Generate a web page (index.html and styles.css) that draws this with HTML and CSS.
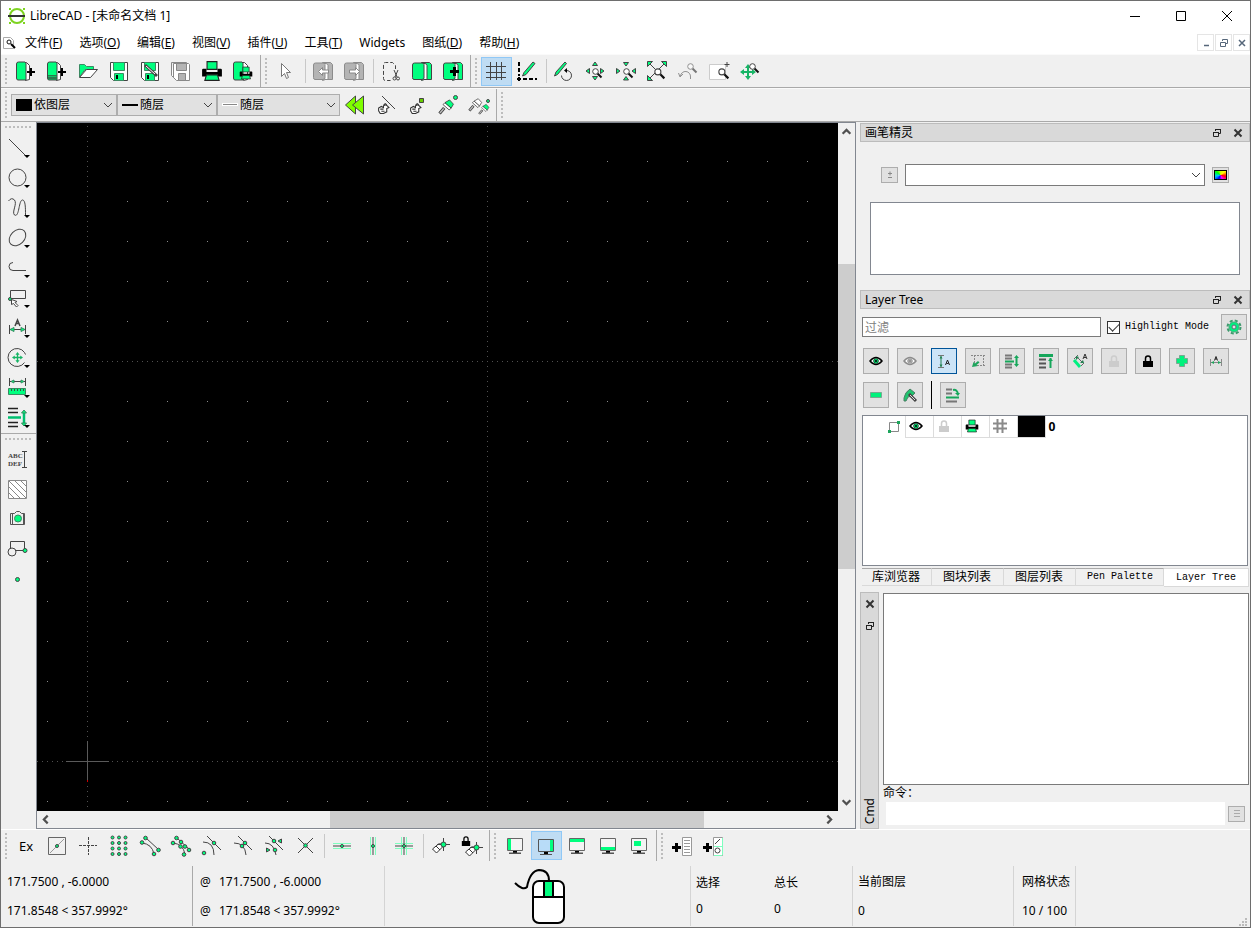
FILE: index.html
```
<!DOCTYPE html>
<html lang="zh-CN">
<head>
    <meta charset="UTF-8">
    <meta name="viewport" content="width=device-width, initial-scale=1.0">
    <title>LibreCAD - [未命名文档 1]</title>
    <link rel="stylesheet" href="styles.css">
</head>
<body>
    <!-- Shared icon shapes -->
    <svg class="symbols" aria-hidden="true">
        <symbol id="lens" viewBox="0 0 12 12"><path d="M6.500 6.500l4 4" stroke="#111" stroke-width="2"/><circle cx="4.500" cy="4.500" r="2.800" fill="#fff" stroke="#444"/></symbol>
        <symbol id="chevron" viewBox="0 0 10 10"><path d="M1 3l4 4 4-4" fill="none" stroke="#444"/></symbol>
        <symbol id="arrow" viewBox="0 0 10 10"><path d="M1.500 3l3.500 3.500L8.500 3" fill="none" stroke="#505050" stroke-width="2"/></symbol>
        <symbol id="restore" viewBox="0 0 10 10"><path d="M3.500 3V1.500h5v4H7M3 1.500h6M1 4.500h5.500M1.500 4v4.500h5V4" fill="none" stroke="#222"/></symbol>
        <symbol id="cross" viewBox="0 0 10 10"><path d="M1.500 1.500l7 7M8.500 1.500l-7 7" stroke="#333" stroke-width="2"/></symbol>
        <symbol id="eye" viewBox="0 0 14 10"><path d="M1 5q6-7 12 0q-6 7-12 0z" fill="#fff" stroke="currentColor" stroke-width="1.500"/><circle cx="7" cy="5" r="2.500" fill="var(--iris)" stroke="currentColor" stroke-width=".5"/><circle cx="7" cy="5" r="1" fill="currentColor" stroke="none"/></symbol>
        <symbol id="lock" viewBox="0 0 12 14"><path d="M3.500 7V4.500a2.500 2.500 0 0 1 5 0V7" fill="none" stroke="currentColor" stroke-width="1.500"/><path d="M1 7h10v6H1z" fill="currentColor" stroke="none"/></symbol>
        <symbol id="printer" viewBox="0 0 20 20"><path d="M5.500 1.500h9v7h-9z" fill="#00ff7f" stroke="#222"/><path d="M1 9q0-1 1-1h3v3h10V8h3q1 0 1 1v6H1z" fill="#000" stroke="none"/><path d="M5 13.500h10l1.500 5h-13z" fill="#00ff7f" stroke="#222"/></symbol>
        <symbol id="monitor" viewBox="0 0 18 18"><path d="M1.500 1.500h15v12h-15z" fill="#f4f4f4" stroke="#666"/><path d="M7 14h4v2H7z" fill="#000" stroke="none"/><path d="M3 15.500h12V17H3z" fill="#555" stroke="none"/></symbol>
        <symbol id="pages" viewBox="0 0 22 22"><path d="M10.500 2.500h8l2 2v15h-7l-3 1z" fill="var(--leaf)" stroke="var(--edge)"/><path d="M10 3.500h4q2 .5 2 2v14h-3" fill="#fff" stroke="var(--edge)"/><path d="M1.500 5q0-2 2-2h8l1.500 1.500v14l-2 1h-8q-1.500 0-1.500-2z" fill="var(--leaf)" stroke="var(--edge)"/></symbol>
        <symbol id="hand" viewBox="0 0 12 12"><path d="M1.500 9V6.500L4 5l2 1V4.500Q8 3 9.500 4.500L11 6l-2 1v3l-3 1.500H3z" fill="#fff" stroke="#333"/><path d="M3 7.500h3M4 9.500h3M6 4l1.500-1.500 1.500 1" stroke="#333"/></symbol>
        <symbol id="brush" viewBox="0 0 22 22"><path d="M2 20l6-7" stroke="#333" stroke-width="4"/><path d="M2.500 19.500l5-6" stroke="#bbb" stroke-width="2"/><path d="M6.500 8.500L9 6l8 7-2.500 2.500z" fill="#fff" stroke="#333"/><path d="M9 6l6-3.500 5 5.500-3 5z" fill="var(--leaf)" stroke="#333"/></symbol>
        <symbol id="rubber" viewBox="0 0 14 12"><path d="M1.500 7l6-5q4-1 4 3l-6 6z" fill="#fff" stroke="#333"/><path d="M5 4l4 4" stroke="#333"/></symbol>
        <symbol id="move" viewBox="0 0 16 16"><path d="M8 3v10M3 8h10" stroke="#16b565" stroke-width="2"/><path d="M5 4l3-4 3 4zM5 12l3 4 3-4zM4 5L0 8l4 3zM12 5l4 3-4 3z" fill="#16b565" stroke="none"/></symbol>
    </svg>

    <div class="window">
        <header class="title-bar">
            <svg class="logo" viewBox="0 0 18 18"><circle cx="9" cy="9" r="7" fill="none" stroke="#7ed321" stroke-width="2"/><path d="M1 1h2v2H1zM15 1h2v2h-2zM1 15h2v2H1zM15 15h2v2h-2z" fill="#7ed321"/><path d="M0 9h17" stroke="#333" stroke-width="2"/></svg>
            <h1>LibreCAD - [未命名文档 1]</h1>
            <div class="window-buttons">
                <button type="button" aria-label="最小化"><svg viewBox="0 0 12 12"><path d="M1 6.500h10"/></svg></button>
                <button type="button" aria-label="最大化"><svg viewBox="0 0 12 12"><path d="M1.500 1.500h9v9h-9z"/></svg></button>
                <button type="button" aria-label="关闭"><svg viewBox="0 0 12 12"><path d="M1 1l10 10M11 1L1 11"/></svg></button>
            </div>
        </header>

        <nav class="menu-bar">
            <svg class="doc-icon" viewBox="0 0 14 14"><path d="M1.500 1.500h7l3 3v8h-10z" fill="#fff" stroke="#aaa"/><circle cx="7" cy="6" r="2" fill="#fff" stroke="#111"/><path d="M9 8l4 4" stroke="#000" stroke-width="2"/></svg>
            <ul>
                <li><a href="#">文件(<u>F</u>)</a></li>
                <li><a href="#">选项(<u>O</u>)</a></li>
                <li><a href="#">编辑(<u>E</u>)</a></li>
                <li><a href="#">视图(<u>V</u>)</a></li>
                <li><a href="#">插件(<u>U</u>)</a></li>
                <li><a href="#">工具(<u>T</u>)</a></li>
                <li><a href="#">Widgets</a></li>
                <li><a href="#">图纸(<u>D</u>)</a></li>
                <li><a href="#">帮助(<u>H</u>)</a></li>
            </ul>
            <div class="mdi-buttons">
                <button type="button" aria-label="最小化"><svg viewBox="0 0 10 10"><path d="M3 7.500h5" stroke="#56677a" stroke-width="1.500"/></svg></button>
                <button type="button" aria-label="还原"><svg viewBox="0 0 10 10"><path d="M3.500 3V1.500h5v4H7M1.500 4.500h5v4h-5z" fill="none" stroke="#56677a"/></svg></button>
                <button type="button" aria-label="关闭"><svg viewBox="0 0 10 10"><path d="M2 2l6 6M8 2L2 8" stroke="#56677a" stroke-width="1.500"/></svg></button>
            </div>
        </nav>

        <div class="tool-row">
            <div class="toolbar">
                <span class="handle"></span>
                <button type="button" class="tool" aria-label="新建"><svg class="ic" viewBox="0 0 22 22"><path class="w" d="M8.500 2.500h3l3 3v14l-4 1z"/><path class="g" d="M1.500 4q0-2 2-2H10l1 1v17H3q-1.500 0-1.500-2z"/><path class="k" d="M15 8h2v3h3v2h-3v3h-2v-3h-3v-2h3z"/></svg></button>
                <button type="button" class="tool" aria-label="从模板新建"><svg class="ic" viewBox="0 0 22 22"><path class="w" d="M8.500 2.500h3l3 3v14l-4 1z"/><path class="g" d="M1.500 4q0-2 2-2H10l1 1v17H3q-1.500 0-1.500-2z"/><path d="M2 15.500h9" stroke="#2a7a50"/><path d="M2 18h9" stroke="#2a7a50" stroke-width="3"/><path class="k" d="M15 8h2v3h3v2h-3v3h-2v-3h-3v-2h3z"/></svg></button>
                <button type="button" class="tool" aria-label="打开"><svg class="ic" viewBox="0 0 22 22"><path class="g nl" d="M2.500 17V4.500h5l2 2h7v3H8z"/><path class="w" d="M2.500 17.500l7-8h11l-7 8z"/></svg></button>
                <button type="button" class="tool" aria-label="保存"><svg class="ic" viewBox="0 0 22 22"><path class="w" d="M2.500 2.500h17v18h-14l-3-3z"/><path class="g nl" d="M5.500 2.500h11v8h-11zM6.500 13.500h9v7h-9z"/><path class="k" d="M8 15h2v4H8z"/></svg></button>
                <button type="button" class="tool" aria-label="另存为"><svg class="ic" viewBox="0 0 22 22"><path class="w" d="M2.500 2.500h17v18h-14l-3-3z"/><path class="g nl" d="M5.500 2.500h11v8h-11zM6.500 13.500h9v7h-9z"/><path class="k" d="M8 15h2v4H8z"/><path d="M6 5l12 11" stroke-width="3"/><path d="M7 6l9 8" stroke="#fff"/></svg></button>
                <button type="button" class="tool" aria-label="全部保存"><svg class="ic gray" viewBox="0 0 22 22"><path class="w" d="M1.500 2.500h15v2M1.500 2.500v13l3 3"/><path class="w" d="M3.500 3.500h15l1 1v16h-13l-3-3z"/><path class="g" d="M6.500 3.500h10v7h-10zM8.500 13.500h7v7h-7z"/></svg></button>
                <button type="button" class="tool" aria-label="打印"><svg class="ic"><use href="#printer"/></svg></button>
                <button type="button" class="tool" aria-label="打印预览"><svg class="ic" viewBox="0 0 22 22"><path class="w" d="M8.500 2.500h4l3 3v14l-4 1z"/><path class="g" d="M1.500 4q0-2 2-2H10l1 1v17H3q-1.500 0-1.500-2z"/><use href="#printer" x="7" y="6" width="14" height="14"/></svg></button>
            </div>
            <div class="toolbar">
                <span class="handle"></span>
                <button type="button" class="tool" aria-label="选择"><svg class="ic" viewBox="0 0 22 22"><path d="M6.500 3.500v13l3-3 2 5 2-1-2-5h4z" fill="#fff" stroke="#777"/></svg></button>
                <span class="sep"></span>
                <button type="button" class="tool" aria-label="撤销"><svg class="ic muted" viewBox="0 0 22 22"><use href="#pages"/><path class="w" d="M6.500 11.500l4-4v2.500h6v3h-6v2.500z"/></svg></button>
                <button type="button" class="tool" aria-label="重做"><svg class="ic muted" viewBox="0 0 22 22"><use href="#pages"/><path class="w" d="M16.500 11.500l-4-4v2.500h-6v3h6v2.500z"/></svg></button>
                <span class="sep"></span>
                <button type="button" class="tool" aria-label="剪切"><svg class="ic" viewBox="0 0 22 22"><path d="M15.500 9V5.500l-3-3h-7q-2 0-2 2v14q0 2 2 2h5" stroke-dasharray="4 2"/><path d="M14 10l3 7M18 10l-3 7"/><circle cx="14.500" cy="18.500" r="1.500"/><circle cx="18" cy="18.500" r="1.500"/></svg></button>
                <button type="button" class="tool" aria-label="复制"><svg class="ic"><use href="#pages"/></svg></button>
                <button type="button" class="tool" aria-label="粘贴"><svg class="ic" viewBox="0 0 22 22"><use href="#pages"/><path class="k" d="M11 7h3v3h3v3h-3v3h-3v-3H8v-3h3z"/></svg></button>
            </div>
            <div class="toolbar last">
                <span class="handle"></span>
                <button type="button" class="tool active" aria-label="网格"><svg class="ic" viewBox="0 0 22 22"><path d="M5.500 2v18M11.500 2v18M16.500 2v18M1 6.500h20M1 12.500h20M1 17.500h20"/></svg></button>
                <button type="button" class="tool" aria-label="草图模式"><svg class="ic" viewBox="0 0 22 22"><path d="M3 2v14M7 19h14" stroke="#000" stroke-width="2" stroke-dasharray="4 2"/><path d="M1 19h4M3 17v4" stroke="#000" stroke-width="2"/><path class="g" d="M8 12.500l9-10.500 2 1.500-9 11-3.500 1.500z"/></svg></button>
                <span class="sep"></span>
                <button type="button" class="tool" aria-label="重绘"><svg class="ic" viewBox="0 0 22 22"><path class="g" d="M3 12l9-10 1.500 1.500-9 11L1.500 16z"/><path d="M13 10.500a5 5 0 1 1-4.500 5"/><path class="k" d="M14 8v5l-3-2.500z"/></svg></button>
                <button type="button" class="tool" aria-label="放大"><svg class="ic" viewBox="0 0 22 22"><path class="g" d="M8.500 5.500h5L11 2zM8.500 16.500h5L11 20zM5.500 8.500v5L2 11zM16.500 8.500v5L20 11z"/><use href="#lens" x="7" y="7" width="12" height="12"/></svg></button>
                <button type="button" class="tool" aria-label="缩小"><svg class="ic" viewBox="0 0 22 22"><path class="g" d="M8.500 2.500h5L11 6zM8.500 20h5L11 16.500zM1.500 8.500v5L5 11zM20.500 8.500v5L17 11z"/><use href="#lens" x="7" y="7" width="12" height="12"/></svg></button>
                <button type="button" class="tool" aria-label="自动缩放"><svg class="ic" viewBox="0 0 22 22"><path d="M3 3l7 7M19 3L3 19"/><path class="g" d="M1.500 1.500h5l-5 5zM20.500 1.500h-5l5 5zM1.500 20.500h5l-5-5z"/><use href="#lens" x="7" y="7" width="13" height="13"/></svg></button>
                <button type="button" class="tool" aria-label="上一视图"><svg class="ic" viewBox="0 0 22 22" opacity=".55"><path d="M13.500 19v-2a5 5 0 0 0-10-1M1.500 13l1.500 4 3-3"/><use href="#lens" x="9" y="2" width="12" height="12"/></svg></button>
                <button type="button" class="tool" aria-label="窗口缩放"><svg class="ic" viewBox="0 0 22 22"><path d="M1.500 4.500h16v15h-16z" fill="#fff" stroke="#ccc"/><path d="M19 2v5M16.500 4.500h5"/><use href="#lens" x="9" y="7" width="13" height="13"/></svg></button>
                <button type="button" class="tool" aria-label="平移"><svg class="ic" viewBox="0 0 22 22"><use href="#move" x="1" y="4" width="16" height="16"/><use href="#lens" x="9" y="2" width="12" height="12"/></svg></button>
            </div>
        </div>

        <div class="tool-row pen-row">
            <div class="toolbar">
                <span class="handle"></span>
                <div class="combo combo-color"><span class="swatch"></span><select aria-label="颜色"><option>依图层</option></select><svg class="chev"><use href="#chevron"/></svg></div>
                <div class="combo combo-width"><span class="swatch"></span><select aria-label="线宽"><option>随层</option></select><svg class="chev"><use href="#chevron"/></svg></div>
                <div class="combo combo-type"><span class="swatch"></span><select aria-label="线型"><option>随层</option></select><svg class="chev"><use href="#chevron"/></svg></div>
                <button type="button" class="tool" aria-label="后退"><svg class="ic" viewBox="0 0 22 22"><path d="M11.500 2v18L1.500 11z" fill="#7fff00"/><path d="M19.500 2v18L8.500 11z" fill="#7fff00"/></svg></button>
                <button type="button" class="tool" aria-label="从图元取笔"><svg class="ic" viewBox="0 0 22 22"><path d="M7 2l13 13"/><use href="#hand" x="2" y="7" width="13" height="13"/></svg></button>
                <button type="button" class="tool" aria-label="从图层取笔"><svg class="ic" viewBox="0 0 22 22"><use href="#hand" x="3" y="7" width="13" height="13"/><path d="M13.500 4.500h4v4h-4z" fill="#66cc00"/></svg></button>
                <button type="button" class="tool" aria-label="应用画笔"><svg class="ic" viewBox="0 0 22 22"><use href="#brush" x="1" y="4" width="17" height="17"/><circle class="g" cx="18.500" cy="3.500" r="2"/></svg></button>
                <button type="button" class="tool" aria-label="复制画笔"><svg class="ic" viewBox="0 0 22 22"><use href="#brush" y="2" width="15" height="17" class="white-leaf"/><use href="#brush" x="10" y="9" width="12" height="12"/><circle class="g" cx="20" cy="7" r="1.500"/></svg></button>
            </div>
            <div class="toolbar last"><span class="handle"></span></div>
        </div>

        <main class="workspace">
            <aside class="side-tools">
                <div class="side-group">
                    <span class="handle-h"></span>
                    <button type="button" class="tool drop" aria-label="直线"><svg class="ic" viewBox="0 0 22 22"><path d="M2 2l16 16"/></svg></button>
                    <button type="button" class="tool drop" aria-label="圆"><svg class="ic" viewBox="0 0 22 22"><circle cx="10.500" cy="10.500" r="8.500"/></svg></button>
                    <button type="button" class="tool drop" aria-label="曲线"><svg class="ic" viewBox="0 0 22 22"><path d="M1.500 4q3-4 6-1c3 4-3 12 0 15 5 3 4-15 8-15 3 0 3 8 3 15"/></svg></button>
                    <button type="button" class="tool drop" aria-label="椭圆"><svg class="ic" viewBox="0 0 22 22"><ellipse cx="10.500" cy="10.500" rx="9.500" ry="7" transform="rotate(-45 10.500 10.500)"/></svg></button>
                    <button type="button" class="tool drop" aria-label="多段线"><svg class="ic" viewBox="0 0 22 22"><path d="M6 5.500a4 4 0 0 0 0 8h13"/></svg></button>
                    <button type="button" class="tool drop" aria-label="选择"><svg class="ic" viewBox="0 0 22 22"><path d="M3.500 3.500h15v8h-15z"/><circle class="g" cx="3" cy="12" r="1.500"/><path class="w" d="M4.500 12.500v5l2-1 3 3.500 1.500-1.500-3-3 2-1z"/></svg></button>
                    <button type="button" class="tool drop" aria-label="标注"><svg class="ic" viewBox="0 0 22 22"><path d="M2.500 8v9M18.500 8v9M3 12.500h15"/><path d="M8 9l2.500-6L13 9M9 6.500h3" stroke-width="1.500"/><path class="g nl" d="M3 12.500l4-2v4zM18 12.500l-4-2v4z"/></svg></button>
                    <button type="button" class="tool drop" aria-label="修改"><svg class="ic" viewBox="0 0 22 22"><path d="M17.500 15.500a9 9 0 1 1 0-10l1 2"/><use href="#move" x="5" y="5" width="11" height="11"/></svg></button>
                    <button type="button" class="tool drop" aria-label="测量"><svg class="ic" viewBox="0 0 22 22"><path d="M2.500 1v8M18.500 1v8M3 4.500h15"/><path class="g nl" d="M4 4.500l3-1.500v3zM17 4.500l-3-1.500v3zM1.500 11.500h17v6h-17z"/><path d="M4.500 12v2M7.500 12v2M10.500 12v2M13.500 12v2M16.500 12v2"/></svg></button>
                    <button type="button" class="tool drop" aria-label="顺序"><svg class="ic" viewBox="0 0 22 22"><path d="M1 1.500h10M1 5.500h10M1 15.500h10M1 19.500h10" stroke="#222" stroke-width="1.500"/><path d="M1 10.500h13M17 5v12" stroke="#00c070" stroke-width="2.500"/><path class="g nl" d="M14.500 6l2.500-3 2.500 3zM14.500 16l2.500 3 2.500-3z"/></svg></button>
                </div>
                <div class="side-group">
                    <span class="handle-h"></span>
                    <button type="button" class="tool" aria-label="文字"><svg class="ic" viewBox="0 0 22 22"><text x="1" y="9">ABC</text><text x="1" y="17">DEF</text><path d="M17.500 3v15M15 2.500h5M15 18.500h5"/></svg></button>
                    <button type="button" class="tool" aria-label="填充"><svg class="ic" viewBox="0 0 22 22"><path d="M1.500 1.500h18v18h-18z" fill="#fff" stroke="#888"/><path d="M2 14l5 5M2 8l11 11M2 2l17 17M8 2l11 11M14 2l5 5" stroke="#888"/></svg></button>
                    <button type="button" class="tool" aria-label="图像"><svg class="ic" viewBox="0 0 22 22"><path d="M3.500 4.500h4l2-2h3l2 2h3v11h-14zM5.500 5v10M16.500 5v10" stroke="#555"/><circle class="g nl" cx="11" cy="9.500" r="3.500"/></svg></button>
                    <button type="button" class="tool" aria-label="块"><svg class="ic" viewBox="0 0 22 22"><path d="M3.500 10V2.500h14v9H8"/><circle cx="5" cy="13" r="4"/><circle class="g" cx="18" cy="11.500" r="2"/></svg></button>
                    <button type="button" class="tool" aria-label="点"><svg class="ic" viewBox="0 0 22 22"><circle class="g" cx="10.500" cy="10.500" r="2"/></svg></button>
                </div>
            </aside>

            <section class="drawing">
                <svg class="canvas" aria-label="绘图区">
                    <defs>
                        <pattern id="grid" x="10" y="38" width="40" height="40" patternUnits="userSpaceOnUse"><rect width="1" height="1" fill="#8c8c8c"/></pattern>
                    </defs>
                    <rect width="100%" height="100%" fill="#000"/>
                    <rect width="100%" height="100%" fill="url(#grid)"/>
                    <g stroke="#505050" stroke-dasharray="1 4">
                        <line x1="50.500" y1="3" x2="50.500" y2="100%"/>
                        <line x1="450.500" y1="3" x2="450.500" y2="100%"/>
                        <line x1="0" y1="238.500" x2="100%" y2="238.500"/>
                        <line x1="0" y1="638.500" x2="100%" y2="638.500"/>
                    </g>
                    <path d="M29 638.500h43M50.500 618v40" stroke="#5a5a5a"/>
                    <path d="M50.500 657v2" stroke="#c00"/>
                </svg>
                <div class="scroll scroll-v">
                    <svg class="arrow up"><use href="#arrow"/></svg>
                    <span class="before"></span><span class="thumb"></span><span class="after"></span>
                    <svg class="arrow"><use href="#arrow"/></svg>
                </div>
                <div class="scroll scroll-h">
                    <svg class="arrow left"><use href="#arrow"/></svg>
                    <span class="before"></span><span class="thumb"></span><span class="after"></span>
                    <svg class="arrow right"><use href="#arrow"/></svg>
                </div>
            </section>

            <aside class="docks">
                <section class="dock pen-wizard">
                    <header class="dock-title">
                        <h2>画笔精灵</h2>
                        <button type="button" aria-label="浮动"><svg><use href="#restore"/></svg></button>
                        <button type="button" aria-label="关闭"><svg><use href="#cross"/></svg></button>
                    </header>
                    <div class="wizard-row">
                        <button type="button" class="mini" aria-label="添加"><svg viewBox="0 0 10 10"><path d="M3 3.500h4M5 1.500v4M3 7.500h4" stroke="#888"/></svg></button>
                        <div class="combo combo-pick"><select aria-label="收藏颜色"><option></option></select><svg class="chev"><use href="#chevron"/></svg></div>
                        <button type="button" class="mini" aria-label="选择颜色"><span class="rainbow"></span></button>
                    </div>
                    <div class="color-list"></div>
                </section>

                <section class="dock layer-tree">
                    <header class="dock-title">
                        <h2>Layer Tree</h2>
                        <button type="button" aria-label="浮动"><svg><use href="#restore"/></svg></button>
                        <button type="button" aria-label="关闭"><svg><use href="#cross"/></svg></button>
                    </header>
                    <div class="filter-row">
                        <input type="text" class="filter" placeholder="过滤" aria-label="过滤">
                        <label class="check"><input type="checkbox" checked> Highlight Mode</label>
                        <button type="button" class="flat" aria-label="设置"><svg viewBox="0 0 16 16"><circle cx="8" cy="8" r="6.500" fill="none" stroke="#3f9a6e" stroke-width="2" stroke-dasharray="3 2.100"/><circle cx="8" cy="8" r="5" fill="#00f080" stroke="#3fae78"/><circle cx="8" cy="8" r="2" fill="#e1e1e1" stroke="#667"/></svg></button>
                    </div>
                    <div class="layer-buttons">
                        <button type="button" class="flat" aria-label="显示全部"><svg viewBox="0 0 16 16"><use href="#eye" x="1" y="3" width="14" height="10"/></svg></button>
                        <button type="button" class="flat" aria-label="隐藏全部"><svg class="off" viewBox="0 0 16 16"><use href="#eye" x="1" y="3" width="14" height="10"/></svg></button>
                        <button type="button" class="flat on" aria-label="文字图层"><svg viewBox="0 0 16 16"><path d="M2 2.500h6M2 14.500h6" stroke="#777"/><path d="M5 3v11" stroke="#208050"/><path d="M3.500 5.500L5 3l1.500 2.500zM3.500 11.500L5 14l1.500-2.500z" fill="#208050"/><path d="M9.500 12l2-5 2 5M10.500 10.500h2" fill="none" stroke="#222"/></svg></button>
                        <button type="button" class="flat" aria-label="虚拟图层"><svg viewBox="0 0 16 16"><path d="M1 2.500h14M4.500 2v12M13.500 2v12M4 12.500h12" fill="none" stroke="#888" stroke-dasharray="2 1"/><path d="M2 14l1.500-5L5 10.500 8 8l1.500 1.500-3 2.500L8 13z" fill="#1da55c"/></svg></button>
                        <button type="button" class="flat" aria-label="居中"><svg viewBox="0 0 16 16"><path d="M1 2.500h7M1 5.500h7M1 11.500h7M1 14.500h7" stroke="#777" stroke-width="2"/><path d="M1 8.500h9M12.500 4v8" stroke="#16a75b" stroke-width="2"/><path d="M10 5l2.500-3L15 5zM10 11l2.500 3 2.500-3z" fill="#16a75b"/></svg></button>
                        <button type="button" class="flat" aria-label="置顶"><svg viewBox="0 0 16 16"><path d="M1 2.500h14" stroke="#16a75b" stroke-width="3"/><path d="M1 6.500h7M1 10.500h7M1 14.500h7" stroke="#555" stroke-width="2"/><path d="M12.500 5v10" stroke="#16a75b" stroke-width="2"/><path d="M10 8l2.500-3L15 8z" fill="#16a75b"/></svg></button>
                        <button type="button" class="flat" aria-label="标注图层"><svg viewBox="0 0 16 16"><path d="M2 7l6 7" stroke="#00f080" stroke-width="3"/><path d="M2 6l4-4M9 13l3-3M5 4l6 6" stroke="#666"/><path d="M4 3v4l3-3zM12 10H8l3-3z" fill="#208050"/><path d="M11 6l2-5 2 5M12 4.500h2" fill="none" stroke="#333"/></svg></button>
                        <button type="button" class="flat" aria-label="解锁"><svg class="faint" viewBox="0 0 16 16"><use href="#lock" x="2" y="1" width="12" height="14"/></svg></button>
                        <button type="button" class="flat" aria-label="锁定"><svg viewBox="0 0 16 16"><use href="#lock" x="2" y="1" width="12" height="14"/></svg></button>
                        <button type="button" class="flat" aria-label="添加图层"><svg viewBox="0 0 16 16"><path d="M5.500 2.500h5v3h3v5h-3v3h-5v-3h-3v-5h3z" fill="#00f27c" stroke="#77a890"/></svg></button>
                        <button type="button" class="flat" aria-label="尺寸图层"><svg viewBox="0 0 16 16"><path d="M2.500 6v7M13.500 6v7M3 9.500h10" stroke="#888"/><path d="M3 9.500l3-1.500v3zM13 9.500L10 8v3z" fill="#1da55c"/><path d="M6.500 7.500l1.500-4 1.500 4M7 6h2" fill="none" stroke="#222"/></svg></button>
                        <button type="button" class="flat" aria-label="删除图层"><svg viewBox="0 0 16 16"><path d="M2.500 5.500h11v5h-11z" fill="#00f27c" stroke="#77a890"/></svg></button>
                        <button type="button" class="flat" aria-label="编辑图层"><svg viewBox="0 0 16 16"><path d="M2 11q1-6 6-9l5 4-3 3-4 1-2 4H2z" fill="#1fc46f" stroke="#4b8065"/><path d="M7 7l7 7" stroke="#444" stroke-width="3"/><path d="M8 8l5 5" stroke="#ddd"/></svg></button>
                        <span class="bar"></span>
                        <button type="button" class="flat" aria-label="移动图层"><svg viewBox="0 0 16 16"><path d="M1 2.500h6M1 6.500h6M1 14.500h11" stroke="#777" stroke-width="2"/><path d="M1 10.500h13" stroke="#16a75b" stroke-width="2"/><path d="M8 3q4-1 5 4" fill="none" stroke="#16a75b" stroke-width="2"/><path d="M10 6h5l-2 3z" fill="#16a75b"/></svg></button>
                    </div>
                    <div class="tree">
                        <table>
                            <tr>
                                <td class="branch"><svg viewBox="0 0 14 14"><path d="M2.500 2.500h9v9h-9z" fill="none" stroke="#888"/><path d="M10 1h3v3h-3zM1 10h3v3H1z" fill="#1da55c"/></svg></td>
                                <td><svg viewBox="0 0 14 14"><use href="#eye" x="0" y="2" width="14" height="10"/></svg></td>
                                <td><svg class="faint" viewBox="0 0 14 14"><use href="#lock" x="1" width="12" height="14"/></svg></td>
                                <td><svg viewBox="0 0 14 14"><use href="#printer" width="14" height="14"/></svg></td>
                                <td><svg viewBox="0 0 14 14"><path d="M4.500 0v14M9.500 0v14M0 4.500h14M0 9.500h14" stroke="#8a8a8a" stroke-width="2"/></svg></td>
                                <td class="black"></td>
                                <td class="name">0</td>
                            </tr>
                        </table>
                    </div>
                    <nav class="tabs">
                        <button type="button">库浏览器</button>
                        <button type="button">图块列表</button>
                        <button type="button">图层列表</button>
                        <button type="button" class="mono">Pen Palette</button>
                        <button type="button" class="mono current">Layer Tree</button>
                    </nav>
                </section>

                <section class="cmd">
                    <header class="cmd-title">
                        <button type="button" aria-label="关闭"><svg><use href="#cross"/></svg></button>
                        <button type="button" aria-label="浮动"><svg><use href="#restore"/></svg></button>
                        <h2>Cmd</h2>
                    </header>
                    <div class="cmd-body">
                        <textarea aria-label="命令历史" readonly></textarea>
                        <label for="cmd-input">命令：</label>
                        <div class="cmd-line">
                            <input type="text" id="cmd-input">
                            <button type="button" class="mini" aria-label="菜单"><svg viewBox="0 0 10 10"><path d="M2 1.500h6M2 4.500h6M2 7.500h6" stroke="#aaa"/></svg></button>
                        </div>
                    </div>
                </section>
            </aside>
        </main>

        <div class="tool-row snap-row">
            <div class="toolbar">
                <span class="handle"></span>
                <button type="button" class="tool ex">Ex</button>
                <button type="button" class="tool" aria-label="自由捕捉"><svg class="ic" viewBox="0 0 22 22"><path d="M2.500 2.500h17v17h-17z" stroke="#666"/><path d="M4 18L18 4" stroke="#999"/><circle class="g" cx="11" cy="11" r="1.500"/></svg></button>
                <button type="button" class="tool" aria-label="网格捕捉"><svg class="ic" viewBox="0 0 22 22"><path d="M2 10.500h18M11.500 2v18" stroke-dasharray="3 1"/></svg></button>
                <button type="button" class="tool" aria-label="栅格"><svg class="ic" viewBox="0 0 22 22"><g class="g"><circle cx="4.500" cy="2.500" r="1.500"/><circle cx="11" cy="2.500" r="1.500"/><circle cx="17.500" cy="2.500" r="1.500"/><circle cx="4.500" cy="8" r="1.500"/><circle cx="11" cy="8" r="1.500"/><circle cx="17.500" cy="8" r="1.500"/><circle cx="4.500" cy="13.500" r="1.500"/><circle cx="11" cy="13.500" r="1.500"/><circle cx="17.500" cy="13.500" r="1.500"/><circle cx="4.500" cy="19" r="1.500"/><circle cx="11" cy="19" r="1.500"/><circle cx="17.500" cy="19" r="1.500"/></g></svg></button>
                <button type="button" class="tool" aria-label="端点"><svg class="ic" viewBox="0 0 22 22"><path d="M7 3l13 12M3 8q10 1 12 11"/><g class="g"><circle cx="6.500" cy="3" r="1.800"/><circle cx="3" cy="7.500" r="1.800"/><circle cx="19.500" cy="15" r="1.800"/><circle cx="15" cy="19" r="1.800"/></g></svg></button>
                <button type="button" class="tool" aria-label="图元上"><svg class="ic" viewBox="0 0 22 22"><path d="M7 3l13 12M3 8q10 1 12 11"/><g class="g"><circle cx="6.500" cy="3" r="1.800"/><circle cx="3" cy="8" r="1.800"/><circle cx="11" cy="7" r="1.800"/><circle cx="10.500" cy="11.500" r="1.800"/><circle cx="15" cy="11.500" r="1.800"/><circle cx="19" cy="15" r="1.800"/><circle cx="14" cy="19.500" r="1.800"/></g></svg></button>
                <button type="button" class="tool" aria-label="中心"><svg class="ic" viewBox="0 0 22 22"><path d="M6 1l14 14M2 7q11 0 11 13"/><circle class="g" cx="13" cy="8" r="1.800"/><circle class="g" cx="3" cy="18" r="1.800"/></svg></button>
                <button type="button" class="tool" aria-label="中点"><svg class="ic" viewBox="0 0 22 22"><path d="M6 1l14 14M2 8q11 0 12 12M8 12l6-4"/><circle class="g" cx="13" cy="8" r="1.800"/><circle class="g" cx="10" cy="11" r="1.800"/></svg></button>
                <button type="button" class="tool" aria-label="距离"><svg class="ic" viewBox="0 0 22 22"><path d="M6 1l14 14M2 8q9 0 11 12"/><g class="g"><circle cx="11" cy="6" r="1.800"/><circle cx="12" cy="15" r="1.800"/><path d="M18.500 4v4L15 6zM3.500 13v4L7 15z"/></g></svg></button>
                <button type="button" class="tool" aria-label="交点"><svg class="ic" viewBox="0 0 22 22"><path d="M4 3l15 15M19 3L4 18"/><circle class="g" cx="11.500" cy="10.500" r="1.800"/></svg></button>
                <span class="sep"></span>
                <button type="button" class="tool" aria-label="水平限制"><svg class="ic" viewBox="0 0 22 22"><path d="M2 8.500h18M2 13.500h18" stroke="#7fffbf"/><path d="M2 11h18"/><circle class="g" cx="11" cy="11" r="1.500"/></svg></button>
                <button type="button" class="tool" aria-label="垂直限制"><svg class="ic" viewBox="0 0 22 22"><path d="M8.500 2v18M13.500 2v18" stroke="#7fffbf"/><path d="M11 2v18"/><circle class="g" cx="11" cy="11" r="1.500"/></svg></button>
                <button type="button" class="tool" aria-label="正交限制"><svg class="ic" viewBox="0 0 22 22"><path d="M8.500 2v18M13.500 2v18M2 8.500h18M2 13.500h18" stroke="#7fffbf"/><path d="M11 2v18M2 11h18"/><circle class="g" cx="11" cy="11" r="1.500"/></svg></button>
                <span class="sep"></span>
                <button type="button" class="tool" aria-label="设置相对零点"><svg class="ic" viewBox="0 0 22 22"><use href="#rubber" x="1" y="7" width="14" height="12"/><path d="M7 9.500h13M13.500 3v13"/><circle class="g" cx="13.500" cy="9.500" r="2.500"/></svg></button>
                <button type="button" class="tool" aria-label="锁定相对零点"><svg class="ic" viewBox="0 0 22 22"><use href="#lock" width="10" height="12"/><use href="#rubber" x="3" y="10" width="14" height="12"/><path d="M9 12.500h13M15.500 7v12"/><circle class="g" cx="15.500" cy="12.500" r="2.500"/></svg></button>
            </div>
            <div class="toolbar">
                <span class="handle"></span>
                <button type="button" class="tool" aria-label="左侧停靠"><svg class="ic" viewBox="0 0 22 22"><use href="#monitor" x="2" y="2" width="18" height="18"/><path class="g none" d="M4 4h3v11H4z"/></svg></button>
                <button type="button" class="tool active" aria-label="右侧停靠"><svg class="ic" viewBox="0 0 22 22"><path d="M3.500 4.500h15v12h-15z" fill="#b8dcf8" stroke="#555"/><path class="k" d="M9 17h4v2H9z"/><path d="M5 19.500h12" stroke="#555"/><path class="g none" d="M15 5h3v11h-3z"/></svg></button>
                <button type="button" class="tool" aria-label="顶部停靠"><svg class="ic" viewBox="0 0 22 22"><use href="#monitor" x="2" y="2" width="18" height="18"/><path class="g none" d="M4 4h14v3H4z"/></svg></button>
                <button type="button" class="tool" aria-label="底部停靠"><svg class="ic" viewBox="0 0 22 22"><use href="#monitor" x="2" y="2" width="18" height="18"/><path class="g none" d="M4 12h14v3H4z"/></svg></button>
                <button type="button" class="tool" aria-label="浮动停靠"><svg class="ic" viewBox="0 0 22 22"><use href="#monitor" x="2" y="2" width="18" height="18"/><path class="g none" d="M6 6h7v5H6z"/></svg></button>
            </div>
            <div class="toolbar last">
                <span class="handle"></span>
                <button type="button" class="tool" aria-label="添加菜单"><svg class="ic" viewBox="0 0 22 22"><path class="k" d="M4 8h3v3h3v3H7v3H4v-3H1v-3h3z"/><path d="M11.500 2.500h9v18h-9z" fill="#fff" stroke="#999"/><path d="M13 5.500h6M13 8.500h6M13 11.500h6M13 14.500h6M13 17.500h6" stroke="#999"/></svg></button>
                <button type="button" class="tool" aria-label="添加工具栏"><svg class="ic" viewBox="0 0 22 22"><path class="k" d="M4 8h3v3h3v3H7v3H4v-3H1v-3h3z"/><path d="M11.500 2.500h9v18h-9z" fill="#fff" stroke="#999"/><path d="M12 11.500h8M20.500 3v17M12 20.500h8" stroke="#7fffbf"/><path d="M13 9l5-5"/><circle cx="15.500" cy="15.500" r="2.500"/></svg></button>
            </div>
        </div>

        <footer class="status">
            <div class="cell coords"><span>171.7500 , -6.0000</span><span>171.8548 &lt; 357.9992°</span></div>
            <div class="cell coords relative"><span><i>@</i>171.7500 , -6.0000</span><span><i>@</i>171.8548 &lt; 357.9992°</span></div>
            <div class="cell mouse">
                <svg viewBox="0 0 52 55"><path d="M2 14q8 8 12 4 3-16 12-17 10 0 10 11" fill="none" stroke="#000" stroke-width="2"/><rect x="20" y="12" width="31" height="42" rx="6" fill="#fff" stroke="#000" stroke-width="2"/><path d="M31 12h9v16h-9z" fill="#00ff7f"/><path d="M20 28h31M31 12v16M40 12v16M26 12h19" stroke="#000" stroke-width="2"/></svg>
            </div>
            <div class="cell tight"><span>选择</span><span>0</span></div>
            <div class="cell tight plain"><span>总长</span><span>0</span></div>
            <div class="cell narrow"><span>当前图层</span><span>0</span></div>
            <div class="cell"><span>网格状态</span><span>10 / 100</span></div>
            <div class="cell rest"><svg viewBox="0 0 8 8"><path d="M6 0h2v2H6zM3 3h2v2H3zM6 3h2v2H6zM0 6h2v2H0zM3 6h2v2H3zM6 6h2v2H6z" fill="#bbb"/></svg></div>
        </footer>
    </div>
</body>
</html>
```
FILE: styles.css
```
:root {
    --bg: #f0f0f0;
    --line: #a9a9a9;
    --leaf: #00ff7f;
    --edge: #444;
    --iris: #00d068;
    --frame: #828790;
}

* {
    box-sizing: border-box;
}

body {
    margin: 0;
    font-family: "Noto Sans", "Noto Sans CJK SC", sans-serif;
    font-size: 12px;
    line-height: 16px;
    color: #000;
    background-color: var(--bg);
}

button, input, select, textarea {
    font: inherit;
    color: inherit;
    margin: 0;
    padding: 0;
    border: 0;
    border-radius: 0;
    background: none;
}

h1, h2 {
    margin: 0;
    font-size: 12px;
    font-weight: normal;
}

.symbols {
    position: absolute;
    width: 0;
    height: 0;
}

.window {
    display: flex;
    flex-direction: column;
    height: 100vh;
    border: 1px solid #6e6e6e;
}

/* Title and menu */
.title-bar {
    display: flex;
    align-items: center;
    flex: none;
    height: 30px;
    padding-left: 7px;
    background-color: #fff;
}

.logo {
    width: 18px;
    height: 18px;
    margin-right: 4px;
}

.window-buttons {
    display: flex;
    margin-left: auto;
}

.window-buttons button {
    display: flex;
    align-items: center;
    justify-content: center;
    width: 46px;
    height: 30px;
}

.window-buttons svg {
    width: 12px;
    height: 12px;
    fill: none;
    stroke: #000;
}

.menu-bar {
    display: flex;
    align-items: center;
    flex: none;
    height: 23px;
    padding: 0 0 0 1px;
    background-color: #fff;
}

.doc-icon {
    width: 14px;
    height: 14px;
}

.menu-bar ul {
    display: flex;
    margin: 0;
    padding: 0;
    list-style: none;
}

.menu-bar a {
    display: block;
    padding: 0 8px 0 9px;
    color: #000;
    text-decoration: none;
}

.mdi-buttons {
    display: flex;
    gap: 1px;
    margin-left: auto;
}

.mdi-buttons button {
    display: flex;
    align-items: center;
    justify-content: center;
    width: 17px;
    height: 17px;
    border: 1px solid #e5e5e5;
}

.mdi-buttons svg {
    width: 10px;
    height: 10px;
}

/* Toolbars */
.tool-row {
    display: flex;
    flex: none;
    height: 34px;
    border-top: 1px solid #fafafa;
    border-bottom: 1px solid var(--line);
}

.toolbar {
    display: flex;
    align-items: center;
    padding: 0 1px 0 4px;
    border-right: 1px solid var(--line);
}

.toolbar.last {
    border-right: 0;
}

.handle {
    width: 3px;
    height: 26px;
    margin-right: 3px;
    border-right: 1px solid var(--bg);
    background: repeating-linear-gradient(#bdbdbd 0 2px, transparent 2px 4px);
}

.sep {
    width: 1px;
    height: 24px;
    margin: 0 2px 0 3px;
    background-color: #c8c8c8;
}

.tool {
    display: flex;
    align-items: center;
    justify-content: center;
    width: 31px;
    height: 29px;
    padding-right: 1px;
}

.tool.active {
    background-color: #bfdcf3;
    border: 1px solid #90c8f6;
}

.ic {
    flex: none;
    width: 22px;
    height: 22px;
    fill: none;
    stroke: #444;
}

.ic .g {
    fill: var(--leaf);
}

.ic .w {
    fill: #fff;
}

.ic .k {
    fill: #000;
    stroke: none;
}

.ic .nl {
    stroke: #3a8a62;
}

.ic .none {
    stroke: none;
}

.ic text {
    font-family: "Liberation Serif", serif;
    font-size: 7px;
    font-weight: bold;
    fill: #444;
    stroke: none;
}

.gray, .muted {
    --leaf: #b4b4b4;
    --edge: #8c8c8c;
    stroke: #888;
}

.white-leaf {
    --leaf: #fff;
}

.ex {
    font-size: 13px;
}

/* Drop-downs */
.combo {
    position: relative;
    height: 22px;
}

.combo select {
    appearance: none;
    width: 100%;
    height: 100%;
    padding-left: 22px;
    border: 1px solid #adadad;
    background-color: #e1e1e1;
}

.combo .chev {
    position: absolute;
    right: 4px;
    top: 6px;
    width: 10px;
    height: 10px;
    pointer-events: none;
}

.swatch {
    position: absolute;
    left: 5px;
    top: 5px;
    width: 16px;
    height: 12px;
    pointer-events: none;
    background-color: #000;
}

.combo-color {
    width: 106px;
}

.combo-width {
    width: 100px;
}

.combo-width .swatch {
    top: 10px;
    height: 2px;
}

.combo-type {
    width: 123px;
}

.combo-type .swatch {
    top: 9px;
    height: 3px;
    border: 1px solid #fff;
    background-color: #888;
}

/* Left toolbars */
.workspace {
    display: flex;
    flex: 1;
    min-height: 0;
}

.side-tools {
    flex: none;
    width: 35px;
}

.side-group {
    display: flex;
    flex-direction: column;
    padding: 4px 2px 0;
    border-bottom: 1px solid var(--line);
}

.side-group:last-child {
    border-bottom: 0;
}

.handle-h {
    height: 2px;
    width: 27px;
    margin: 0 0 5px 2px;
    background: repeating-linear-gradient(90deg, #bdbdbd 0 2px, transparent 2px 4px);
}

.side-group .tool {
    position: relative;
    height: 30px;
}

.drop::after {
    content: "";
    position: absolute;
    right: 4px;
    bottom: 5px;
    border: 3px solid transparent;
    border-top-color: #000;
    border-bottom: 0;
}

/* Drawing area */
.drawing {
    display: grid;
    grid-template-columns: 1fr 17px;
    grid-template-rows: 1fr 17px;
    flex: 1;
    min-width: 0;
    border: 1px solid var(--frame);
}

.canvas {
    width: 100%;
    height: 100%;
    min-height: 0;
    shape-rendering: crispEdges;
}

.scroll {
    display: flex;
}

.scroll-v {
    flex-direction: column;
    width: 17px;
}

.scroll-h {
    height: 17px;
}

.arrow {
    flex: none;
    width: 17px;
    height: 17px;
    padding: 3px;
}

.up {
    transform: rotate(180deg);
}

.left {
    transform: rotate(90deg);
}

.right {
    transform: rotate(-90deg);
}

.thumb {
    background-color: #cdcdcd;
}

.scroll-v .before { flex: 124; }
.scroll-v .thumb { flex: 305; }
.scroll-v .after { flex: 225; }
.scroll-h .before { flex: 276; }
.scroll-h .thumb { flex: 374; }
.scroll-h .after { flex: 117; }

/* Docks */
.docks {
    display: flex;
    flex-direction: column;
    flex: none;
    width: 390px;
    margin-left: 4px;
    padding-top: 1px;
}

.dock-title {
    display: flex;
    align-items: center;
    gap: 11px;
    height: 19px;
    padding: 0 6px 0 4px;
    background-color: #d9d9d9;
    border: 1px solid #bcbcbc;
}

.dock-title h2 {
    margin-right: auto;
}

.dock-title button, .cmd-title button {
    display: block;
    width: 10px;
    height: 10px;
}

.dock-title svg, .cmd-title svg {
    display: block;
    width: 10px;
    height: 10px;
}

.wizard-row {
    display: flex;
    align-items: center;
    gap: 7px;
    padding: 22px 21px 16px;
}

.combo-pick {
    flex: 1;
}

.combo-pick select {
    background-color: #fff;
    border-color: #7a7a7a;
}

.mini {
    display: flex;
    align-items: center;
    justify-content: center;
    flex: none;
    width: 17px;
    height: 16px;
    background-color: #e1e1e1;
    border: 1px solid #adadad;
}

.mini svg {
    width: 10px;
    height: 10px;
}

.rainbow {
    width: 13px;
    height: 10px;
    border: 1px solid #000;
    background: conic-gradient(#cf0, #ff0, #f00, #f0f, #00f, #0cf, #0f0, #cf0);
}

.color-list {
    height: 73px;
    margin: 0 10px 15px;
    background-color: #fff;
    border: 1px solid var(--frame);
}

.layer-tree {
    display: flex;
    flex-direction: column;
    flex: none;
}

.filter-row {
    display: flex;
    align-items: center;
    padding: 5px 3px 8px 2px;
}

.filter {
    flex: 1;
    min-width: 0;
    height: 20px;
    padding: 0 2px;
    background-color: #fff;
    border: 1px solid #7a7a7a;
}

.filter::placeholder {
    color: #808080;
}

.check {
    display: flex;
    align-items: center;
    gap: 5px;
    margin: 0 12px 0 6px;
    font-family: "Liberation Mono", monospace;
    font-size: 10px;
}

.check input {
    appearance: none;
    width: 13px;
    height: 13px;
    background-color: #fff;
    border: 1px solid #333;
}

.check input:checked::after {
    content: "";
    display: block;
    width: 9px;
    height: 5px;
    margin: 1px 0 0 1px;
    border: solid #333;
    border-width: 0 0 1px 1px;
    transform: rotate(-45deg);
}

.layer-buttons {
    display: flex;
    flex-wrap: wrap;
    align-items: center;
    gap: 7px 8px;
    padding: 0 3px 6px;
}

.flat {
    display: flex;
    align-items: center;
    justify-content: center;
    width: 26px;
    height: 26px;
    background-color: #e1e1e1;
    border: 1px solid #adadad;
}

.flat.on {
    background-color: #cce4f7;
    border-color: #005499;
}

.flat svg {
    width: 16px;
    height: 16px;
}

.bar {
    width: 1px;
    height: 28px;
    background-color: #000;
}

.off {
    --iris: #aaa;
    color: #8c8c8c;
}

.faint {
    color: #ccc;
}

.tree {
    height: 151px;
    margin: 0 2px 2px;
    background-color: #fff;
    border: 1px solid var(--frame);
}

.tree table {
    border-collapse: collapse;
}

.tree td {
    width: 28px;
    height: 21px;
    padding: 0 0 0 3px;
    border: 1px solid #dcdcdc;
    border-top: 0;
}

.tree td svg {
    display: block;
    width: 14px;
    height: 14px;
}

.tree .branch {
    width: 42px;
    padding-left: 24px;
    border: 0;
}

.tree .black {
    background-color: #000;
}

.tree .name {
    border: 0;
    font-weight: bold;
}

.tabs {
    display: flex;
    align-items: flex-start;
    padding: 0 1px 0 2px;
}

.tabs button {
    height: 18px;
    padding: 0 12px 0 11px;
    border: 1px solid #d9d9d9;
    border-left: 0;
    border-top-color: var(--line);
    line-height: 16px;
}

.tabs button:first-child {
    padding: 0 11px 0 10px;
}

.tabs .mono {
    padding: 0 10px;
    padding-left: 11px;
    font-family: "Liberation Mono", monospace;
    font-size: 10px;
}

.tabs .current {
    flex: 1;
    height: 19px;
    padding: 1px 0 0;
    background-color: #fff;
    border-top-color: #d9d9d9;
}

.cmd {
    display: flex;
    flex: 1;
    min-height: 0;
    gap: 4px;
    padding-top: 5px;
}

.cmd-title {
    display: flex;
    flex-direction: column;
    align-items: center;
    gap: 12px;
    width: 19px;
    padding: 6px 0 4px;
    background-color: #d9d9d9;
    border: 1px solid #bcbcbc;
}

.cmd-title h2 {
    margin-top: auto;
    writing-mode: vertical-rl;
    transform: rotate(180deg);
}

.cmd-body {
    display: flex;
    flex-direction: column;
    flex: 1;
    min-width: 0;
    padding: 1px 1px 4px 0;
}

.cmd-body textarea {
    flex: 1;
    min-height: 0;
    background-color: #fff;
    border: 1px solid #7a7a7a;
    resize: none;
}

.cmd-line {
    display: flex;
    align-items: center;
    gap: 3px;
    padding: 1px 4px 0 3px;
}

.cmd-line input {
    flex: 1;
    min-width: 0;
    height: 23px;
    background-color: #fff;
}

/* Snap row and status bar */
.snap-row {
    height: 35px;
    padding-bottom: 2px;
    border-top-color: #fff;
    border-bottom-color: var(--bg);
}

.status {
    display: grid;
    grid-template-columns: 192fr 192fr 306fr 78fr 84fr 161fr 62fr 174fr;
    flex: none;
    height: 63px;
    padding: 2px 0 1px;
}

.cell {
    display: flex;
    flex-direction: column;
    justify-content: center;
    gap: 13px;
    padding-left: 8px;
    border-right: 1px solid #d4d4d4;
    white-space: nowrap;
}

.coords {
    padding-left: 6px;
}

.coords:first-child {
    border-right-color: var(--line);
}

.relative {
    padding-left: 7px;
}

.relative i {
    display: inline-block;
    width: 19px;
    font-style: normal;
}

.mouse {
    align-items: center;
    padding-left: 2px;
}

.mouse svg {
    width: 52px;
    height: 55px;
}

.tight {
    gap: 10px;
    padding-left: 5px;
    border-right: 0;
}

.plain {
    border-right: 1px solid #d4d4d4;
}

.narrow {
    padding-left: 5px;
}

.rest {
    align-items: flex-end;
    justify-content: flex-end;
    padding-right: 3px;
    border: 0;
}

.rest svg {
    width: 8px;
    height: 8px;
}
```
